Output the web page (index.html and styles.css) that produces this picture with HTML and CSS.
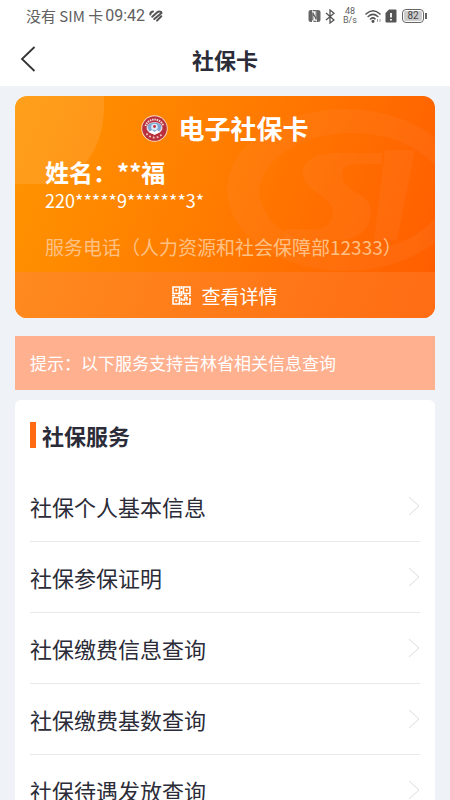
FILE: index.html
```html
<!DOCTYPE html>
<html lang="zh-CN">
<head>
<meta charset="utf-8">
<meta name="viewport" content="width=device-width, initial-scale=1">
<title>社保卡</title>
<link rel="stylesheet" href="styles.css">
</head>
<body>
<div class="status">
  <span class="carrier">没有 SIM 卡</span>
  <span class="clock">09:42</span>
  <svg class="heart" width="14" height="12" viewBox="0 0 14 12" fill="none" stroke="#555" stroke-width="2" stroke-linecap="round"><path d="M1.300 4.500Q1.300 2 4 1.500M3.300 6.800L8 2.400Q10 .8 12 1.800M5.300 9L12.500 3M8 10.600L12.300 6.300"/></svg>
  <div class="indicators">
    <svg width="13" height="14" viewBox="0 0 13 14"><path d="M3 1h1v12H3Q.5 13 .5 11V3Q.5 1 3 1zM9 1h1Q12.500 1 12.500 3v8q0 2-2.500 2H9z" fill="#666"/><path d="M4.800 11.500V3.500L8.200 10.500V2.500M4.500 1.600h3.500q1 0 1 1M8.500 12.400H5.500" fill="none" stroke="#666" stroke-width="1.200"/></svg>
    <svg width="10" height="15" viewBox="0 0 10 15" fill="none" stroke="#555" stroke-width="1.300"><path d="M1 4l8 7-4 3V1L9 4.200 1 11"/></svg>
    <span class="speed">48<br>B/s</span>
    <svg width="16" height="14" viewBox="0 0 16 14" fill="none" stroke="#555" stroke-width="1.600" stroke-linecap="round"><path d="M1 5Q8 -1.500 15 5M3.200 7.500Q8 3.300 12.800 7.500M5.500 10Q8 8 10 9.800"/><circle cx="8" cy="12.300" r=".8" fill="#555"/><path d="M12.500 10.500v2M15 10.500v2" stroke="#999" stroke-width="1"/></svg>
    <svg width="12" height="14" viewBox="0 0 12 14"><path d="M4 .5h6.500q1 0 1 1v11q0 1-1 1h-9q-1 0-1-1V4z" fill="#555"/><path d="M6 4v4.500M6 10v1.500" stroke="#fff" stroke-width="1.800"/></svg>
    <span class="battery"><span class="level">82</span></span>
  </div>
</div>
<header class="nav">
  <button class="back" type="button" aria-label="返回"><svg width="16" height="26" viewBox="0 0 16 26" fill="none" stroke="#333" stroke-width="1.800"><path d="M14.500 1L2 13l12.500 12"/></svg></button>
  <h1>社保卡</h1>
</header>
<main>
  <section class="card">
    <svg class="mark" viewBox="0 0 420 222" preserveAspectRatio="xMaxYMin slice" aria-hidden="true">
      <path d="M0 0h89v12Q88 50 66 72 50 88 30 88H0z" fill="#fff" fill-opacity=".1"/>
      <g fill="#ff9858" fill-opacity=".12">
        <path fill-rule="evenodd" d="M212 94a118 81 0 0 1 236 0 118 81 0 0 1-236 0zM245 96a92 59 0 0 0 184 0 92 59 0 0 0-184 0z"/>
        <path d="M318 57H367V68H339Q324 69 328 84 332 92 344 98 360 107 355 124 350 142 328 144H270V133H302Q318 131 318 115 317 106 304 98 285 87 288 72 294 58 318 57z"/>
        <path d="M370 54H400L382 144H359z"/>
      </g>
    </svg>
    <div class="card-body">
      <div class="card-title">
        <svg width="27" height="27" viewBox="0 0 27 27" aria-hidden="true"><circle cx="13.500" cy="13.500" r="13.200" fill="#f7d9c8"/><circle cx="13.500" cy="13.500" r="12.300" fill="#b9303c"/><path d="M4.500 11a9.500 9.500 0 0 1 18 0" fill="none" stroke="#f2d8d6" stroke-width="2" stroke-dasharray="1.500 .8"/><path d="M5.500 18.500a9.800 9.800 0 0 0 16 0" fill="none" stroke="#eec2bf" stroke-width="1.800" stroke-dasharray="1.800 2"/><ellipse cx="13.500" cy="13" rx="8" ry="6" fill="#e9dce4"/><path d="M6.500 10q7-5 14 0-.5 8-7 8t-7-8z" fill="#7fa6d2"/><path d="M8 17l3-2 2.500 2 2.500-2 3 2-5.500 3z" fill="#fff"/><circle cx="13.500" cy="12" r="3.300" fill="#dcebf7"/><circle cx="13.500" cy="11.500" r="1.400" fill="#c62e3a"/></svg>
        <h2>电子社保卡</h2>
      </div>
      <p class="name">姓名：**福</p>
      <p class="number">220*****9*******3*</p>
      <p class="phone">服务电话（人力资源和社会保障部12333）</p>
    </div>
    <button class="details" type="button">
      <svg width="19" height="19" viewBox="0 0 19 19" fill="none" stroke="#fff" stroke-width="1.600" aria-hidden="true"><path d="M1 1h6.500v6.500H1zM11.500 1H18v6.500h-6.500zM1 11.500h6.500V18H1zM3.300 4.250h2M4.250 3.300v2M13.800 4.250h2M14.750 3.300v2M3.300 14.750h2M4.250 13.800v2M9.500 0v3M9.500 5v4.500H6M0 9.500h3M12 9.500h3M17 9.500h2M9.500 12v2h3v-2.500h2.500v3M18 12v6h-4v-2M9.500 16v3M11 18h2"/></svg>
      <span>查看详情</span>
    </button>
  </section>
  <p class="notice">提示：以下服务支持吉林省相关信息查询</p>
  <section class="services">
    <h2>社保服务</h2>
    <ul>
      <li><a href="#info">社保个人基本信息<svg class="chevron" viewBox="0 0 12 20"><path d="M1 1l10 9-10 9"/></svg></a></li>
      <li><a href="#proof">社保参保证明<svg class="chevron" viewBox="0 0 12 20"><path d="M1 1l10 9-10 9"/></svg></a></li>
      <li><a href="#payments">社保缴费信息查询<svg class="chevron" viewBox="0 0 12 20"><path d="M1 1l10 9-10 9"/></svg></a></li>
      <li><a href="#base">社保缴费基数查询<svg class="chevron" viewBox="0 0 12 20"><path d="M1 1l10 9-10 9"/></svg></a></li>
      <li><a href="#benefits">社保待遇发放查询<svg class="chevron" viewBox="0 0 12 20"><path d="M1 1l10 9-10 9"/></svg></a></li>
    </ul>
  </section>
</main>
</body>
</html>
```
FILE: styles.css
```css
* { box-sizing: border-box; }
body {
  display: flex;
  flex-direction: column;
  height: 100vh;
  margin: 0;
  background: #fff;
  color: #2b2c38;
  font-family: "Noto Sans CJK SC", sans-serif;
}
h1, h2, p, ul { margin: 0; padding: 0; }
button { border: 0; padding: 0; background: none; color: inherit; font: inherit; cursor: pointer; }
svg { flex: none; }

.status {
  display: flex;
  align-items: center;
  flex: none;
  height: 32px;
  padding: 0 26px;
  color: #606060;
  line-height: 20px;
}
.carrier { font-size: 15px; }
.clock { margin: 0 4px 0 2px; font-family: Roboto, sans-serif; font-size: 16px; }
.indicators { display: flex; align-items: center; gap: 4px; margin-left: auto; }
.speed {
  width: 22px;
  font: 9px/9px Roboto, sans-serif;
  text-align: center;
}
.battery {
  position: relative;
  width: 22px;
  margin-left: 1px;
  padding: 1px;
  border: 1px solid #666;
  border-radius: 4px;
}
.battery::after {
  content: "";
  position: absolute;
  top: 3px;
  right: -4px;
  width: 2px;
  height: 6px;
  background: #666;
}
.level {
  display: block;
  border-radius: 2px;
  background: #ccc;
  color: #444;
  font: 10px/10px Roboto, sans-serif;
  text-align: center;
}

.nav {
  display: grid;
  grid-template-columns: 40px 1fr 40px;
  align-items: center;
  flex: none;
  height: 54px;
  padding: 0 15px;
}
.back { display: flex; padding-left: 5px; }
.nav h1 { font-size: 22px; line-height: 32px; text-align: center; }

main {
  flex: 1;
  min-height: 0;
  overflow-y: auto;
  padding: 10px 15px 0;
  background: #eff3f8;
  scrollbar-width: none;
}

.card {
  position: relative;
  overflow: hidden;
  border-radius: 12px;
  background: linear-gradient(110deg, #ff9600 0%, #ff7a00 50%, #ff5c00 100%);
  color: #fff;
}
.mark { position: absolute; inset: 0; width: 100%; height: 100%; }
.card-body { position: relative; height: 176px; padding: 14px 30px 0; }
.card-title { display: flex; align-items: center; justify-content: center; gap: 10px; }
.card-title h2 { font-size: 26px; line-height: 36px; }
.name { margin-top: 10px; font-size: 24px; font-weight: 700; line-height: 32px; }
.number { font-size: 18px; line-height: 24px; }
.phone { margin-top: 20px; color: #ffc084; font-size: 19px; line-height: 30px; white-space: nowrap; }
.details {
  position: relative;
  display: flex;
  align-items: center;
  justify-content: center;
  gap: 10px;
  width: 100%;
  height: 46px;
  background: linear-gradient(110deg, #ff8a1e, #ff6c14);
  font-size: 19px;
}

.notice {
  margin: 18px 0 10px;
  padding: 15px;
  background: #ffb08f;
  color: #fff;
  font-size: 17px;
  line-height: 24px;
}

.services { padding: 20px 15px; border-radius: 6px; background: #fff; }
.services h2 {
  display: flex;
  align-items: center;
  gap: 6px;
  margin-bottom: 21px;
  font-size: 22px;
  line-height: 30px;
}
.services h2::before { content: ""; width: 6px; height: 26px; background: #ff6a13; }
.services ul { list-style: none; }
.services li { border-bottom: 1px solid #e9e9eb; }
.services a {
  display: flex;
  align-items: center;
  justify-content: space-between;
  height: 70px;
  color: inherit;
  font-size: 22px;
  text-decoration: none;
}
.chevron { width: 12px; height: 20px; fill: none; stroke: #dcdcde; stroke-width: 1; }
```
